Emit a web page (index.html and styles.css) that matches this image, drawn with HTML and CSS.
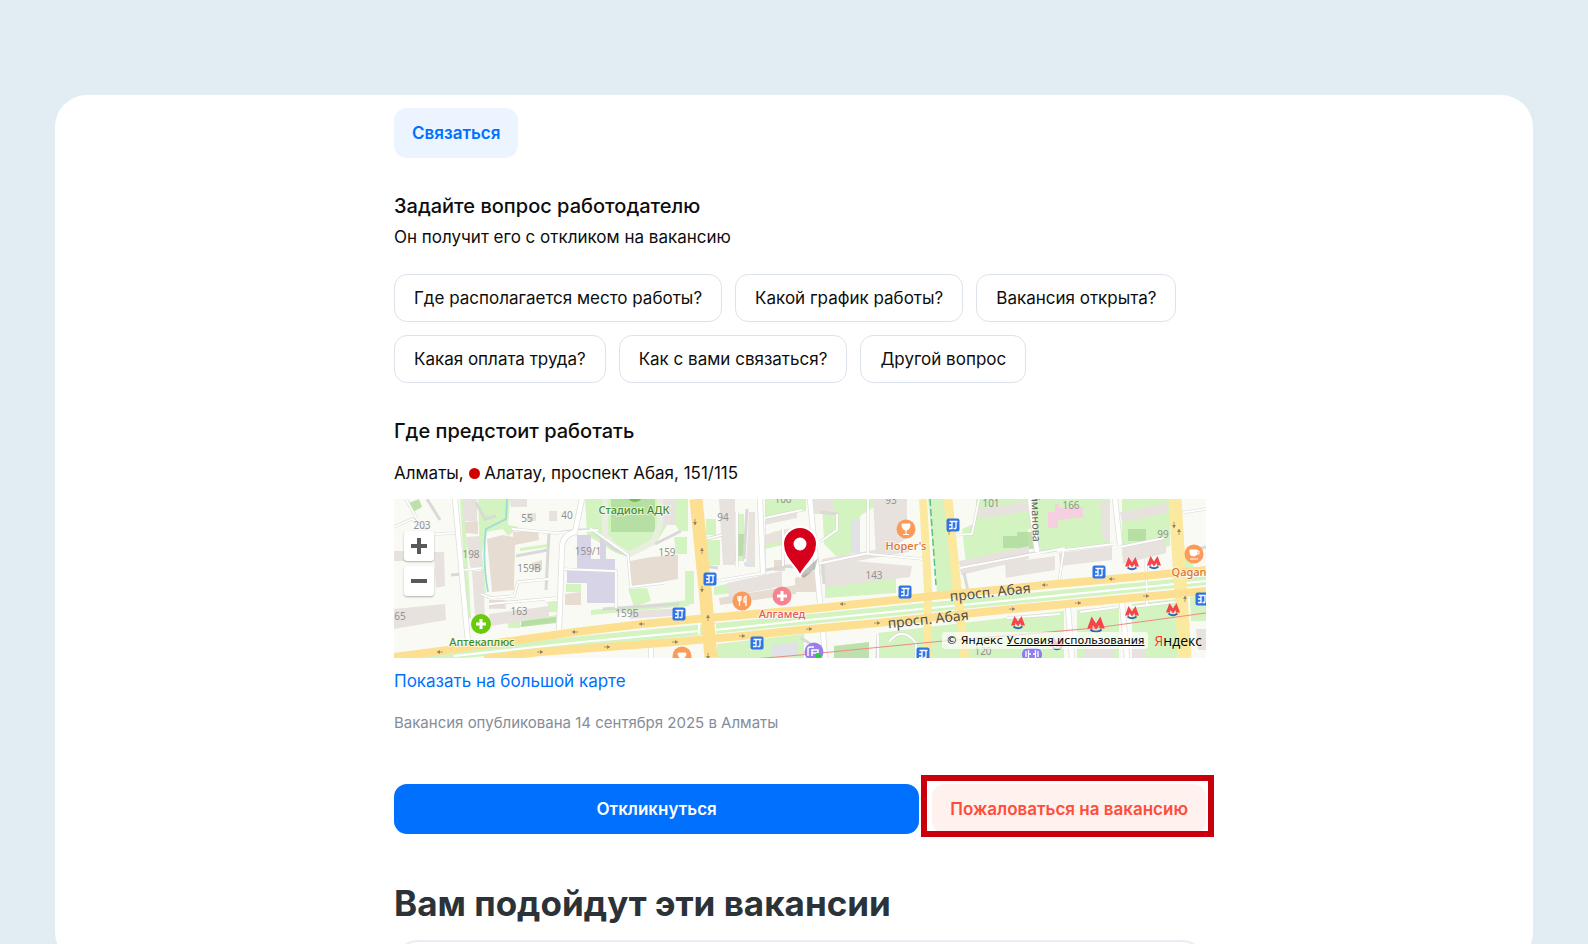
FILE: index.html
```html
<!DOCTYPE html>
<html lang="ru">
<head>
<meta charset="utf-8">
<meta name="viewport" content="width=device-width, initial-scale=1">
<title>Вакансия</title>
<link rel="stylesheet" href="styles.css">
</head>
<body>
<main class="sheet">
  <div class="content">
    <button class="btn btn-soft" type="button">Связаться</button>

    <section class="question">
      <h2 class="title">Задайте вопрос работодателю</h2>
      <p class="text">Он получит его с откликом на вакансию</p>
      <div class="chips">
        <button class="chip" type="button">Где располагается место работы?</button>
        <button class="chip" type="button">Какой график работы?</button>
        <button class="chip" type="button">Вакансия открыта?</button>
        <button class="chip" type="button">Какая оплата труда?</button>
        <button class="chip" type="button">Как с вами связаться?</button>
        <button class="chip" type="button">Другой вопрос</button>
      </div>
    </section>

    <section class="place">
      <h2 class="title">Где предстоит работать</h2>
      <p class="text address">Алматы, <span class="metro-dot"></span> Алатау, проспект Абая, 151/115</p>
      <div class="map">
        <svg class="map-canvas" viewBox="0 0 812 159" preserveAspectRatio="xMidYMid slice" role="img" aria-label="Карта">
          <defs>
            <g id="bus"><rect x="-6.5" y="-6.5" width="13" height="13" rx="2" fill="#2f74e6"/><path d="M-3.500-3.500H4.500M-4 3.500H-1V-3.500M-4 0H-1M3-3.500V3.500M.5 3.500H3" stroke="#fff" stroke-width="1.300" fill="none"/></g>
            <g id="metro"><path d="M-7 3.500L-3.500-6 0-.5 3.500-6 7 3.500H3L2.500 1 0 4.500-2.500 1-3 3.500Z" fill="#f8434a"/><path d="M-4.500 4.500Q0 8 4.500 4.500" fill="none" stroke="#3566b5" stroke-width="1.800"/></g>
            <g id="arrow"><path d="M-3 0H3" stroke="#b59a68"/><path d="M-3 0L0-2V2Z" fill="#8f816d"/></g>
          </defs>
          <rect width="812" height="159" fill="#fafaf5"/>

          <g fill="#d3f3c0">
            <path d="M66 0H70L77 119H73ZM84 0H116L114 26 125 28 114 37 109 30 92 33 88 54 92 94H89L86 58ZM191 0H294V32H285L278 18 262 44 235 58 222 54 193 36ZM126 49L154 45V48L126 52ZM172 85H187V93H172ZM154 102H165V113H154ZM114 122H126V129H114ZM128 121L163 116V122L126 128Z"/>
            <path d="M280 38H293V55H282ZM291 72H300V105H291ZM310 41H326V66H311ZM312 20H322V36H312ZM370 0H412V12L370 18ZM343 15H350V62H341ZM378 33L404 28V43L370 50ZM234 90L253 89 257 102 240 108ZM197 111L295 101V107L197 116ZM320 88L340 83V94L320 96Z"/>
            <path d="M428 0H480V8L466 17V50L446 61 430 45ZM426 63L474 57V60L426 68ZM431 84L502 76V94L431 99ZM582 0H634V55L572 64 568 30 582 24ZM534 0H550L562 92 543 93ZM604 28L634 22V0H716V46L647 55 640 29 604 36ZM728 0H776V47L728 57ZM788 55H799V70H790Z"/>
            <path d="M0 158L188 137 406 116 812 77V86L406 126 188 148 70 159H0ZM323 145L410 135V159H323ZM484 134L670 112V159H482ZM683 111L725 107V159H683ZM738 105L784 100V159H738ZM796 98L812 95V122H797Z"/>
          </g>
          <g fill="#afd99b" opacity=".8">
            <path d="M217 0H261V33H217ZM342 35H350V57H342ZM127 122L162 118V124L127 128ZM15 4L25 0 28 8 19 13ZM440 147L475 143V159H440ZM609 37H632V49H609ZM623 33H640V50H623ZM734 30H752V42H734Z"/>
          </g>
          <path d="M211 0V35Q218 49 236 55L259 43 266 26V0" fill="none" stroke="#e9eee0" stroke-width="6"/>
          <circle cx="241" cy="-5" r="8" fill="#71bd45"/>

          <g fill="#e8e2df">
            <path d="M70 0H83V22H70ZM72 38L86 37 88 68H76ZM78 72H89L91 118H81ZM40 53H50L51 87 42 89ZM0 52H12V62H0ZM0 110L51 105 52 121 0 130ZM95 115L155 107V118L96 127ZM95 101H112V110H95ZM116 0H133V8H117Z"/>
            <path d="M133 14H142V22H133ZM155 12H163V22H155ZM270 0H282V26H270ZM325 0H341V66H329ZM355 13H361V68H352ZM370 18L403 11V19L370 26ZM370 36L402 28V38L370 46ZM333 84L388 72V87L335 98ZM236 112L291 109V116L236 120Z"/>
            <path d="M417 0H440V15H420ZM479 0H513V39L482 59ZM428 60L515 45V53L460 62 518 67 516 78 432 88 426 74ZM584 10L635 2V12L585 20ZM565 62L635 47V60L567 76ZM611 64L661 57V71L612 79ZM665 54L718 47V61L666 67ZM706 2H716V42H709ZM726 13L774 4V14L728 23ZM728 48L772 39V54L729 65ZM692 140H720V159H690ZM738 140H752V159H738ZM802 130H812V151H804Z"/>
          </g>
          <g fill="#e6dcd1">
            <path d="M71 23L84 22V35L71 34ZM93 40L109 36 119 38V33L144 31 145 41 121 46 120 91 98 93ZM95 101H110V109H95ZM171 95L187 93V106H171ZM236 62L257 58 284 56V80L238 88ZM380 61H391V72H380ZM401 79L426 70V93H401ZM325 99L402 86V95L326 106ZM138 64L148 61V71H138Z"/>
          </g>
          <g fill="#d8d4e7">
            <path d="M183 36H197V60H221V104H193V84H173V69H183ZM206 60H212V38H206Z"/>
          </g>
          <path fill="#e1e2e8" d="M457 21H466V54H457ZM378 146L404 143V157H378ZM350 63H358V67H350Z"/>
          <path fill="#f6cfe0" d="M654 13H661V5H665V9L689 8V18L664 21V29H654Z"/>
          <path d="M113 0L112 20 92 30Q88 60 94 93" fill="none" stroke="#9bdcd4" stroke-width="1.800"/>

          <g fill="none" stroke="#d9d9d7" stroke-width="3">
            <path d="M0 28L18 20 33 30M12 0L23 20M33 0L46 21M41 35L65 34M57 76L68 75M70 71L88 69M87 95L97 99 120 97 124 83 155 80M122 57L154 51M118 30L162 34 185 31 204 31M82 4L91 20 102 17M151 102L165 101M95 105L162 99M155 33L152 91M168 70L202 72 222 72V109M196 29L220 50 234 56 237 88 270 84M261 45L287 32M209 110L285 105M312 40L328 36M309 67L324 69M323 82L370 74V0M343 13V68M353 10L350 60M389 30V67L401 68M366 20L408 11M366 72L412 64M426 43L443 31V15L426 13M423 65L475 54M474 0V55L529 60M429 65L430 85M558 36L578 35 585 0M566 69L646 53M570 74L574 92M647 53L670 49 665 83M663 52L720 45M726 48L770 39M752 60L753 107M779 15L812 10M789 54L812 48M484 135L483 159M495 143Q508 126 522 144V159M613 119L666 115M686 113L724 108M738 108L781 103M407 139L423 149"/>
          </g>
          <g fill="none" stroke="#fff" stroke-width="1.800">
            <path d="M0 28L18 20 33 30M12 0L23 20M41 35L65 34M70 71L88 69M87 95L97 99 120 97 124 83 155 80M118 30L162 34 204 31M151 102L165 101M95 105L162 99M168 70L222 72V109M196 29L234 56 237 88 270 84M312 40L328 36M323 82L370 74V0M343 13V68M389 30V67M366 20L408 11M426 43L443 31V15M423 65L475 54M474 0V55L529 60M558 36L578 35 585 0M566 69L670 49 665 83M663 52L720 45M726 48L770 39M752 60L753 107M779 15L812 10M484 135V159M495 143Q508 126 522 144V159M613 119L666 115M686 113L724 108M738 108L781 103"/>
          </g>
          <g fill="none" stroke="#dededb" stroke-width="6">
            <path d="M61 0L74 143M188 0L181 33Q169 36 168 48L165 131M416 0L426 104M429 132L431 159M257 146V159M636 0L643 53M721 0L726 46M674 109L678 159M728 103L733 159M366 0L369 74"/>
          </g>
          <g fill="none" stroke="#fff" stroke-width="4.500">
            <path d="M61 0L74 143M188 0L181 33Q169 36 168 48L165 131M416 0L426 104M429 132L431 159M257 146V159M636 0L643 53M721 0L726 46M674 109L678 159M728 103L733 159M366 0L369 74"/>
          </g>
          <g fill="none" stroke="#fff" stroke-width="2">
            <path d="M60 157L188 143 305 132M321 131L404 122 812 82M321 125V135M305 125V135"/>
          </g>
          <g fill="none" stroke="#fbe99f">
            <path d="M529 0L534 90 533 159" stroke-width="8"/>
            <path d="M554 0L562 80 571 159" stroke-width="9"/>
            <path d="M781 0L791 159" stroke-width="13"/>
          </g>
          <g fill="none" stroke="#fddf91">
            <path d="M302 0L311 90 317 159" stroke-width="13"/>
            <path d="M0 158L46 152 181 133 248 125 314 119 406 111 539 97 651 86 718 80 812 71" stroke-width="8"/>
            <path d="M90 160L146 153 213 148 281 143 348 137 406 131 483 124 618 110 684 104 812 92" stroke-width="8"/>
          </g>
          <path d="M536 0L542 86" stroke="#55c585" stroke-width="1.500" stroke-dasharray="7 3"/>
          <path d="M359 160L406 156 539 143 701 129 812 114" fill="none" stroke="#f08b82" stroke-width="1.200"/>

          <use href="#arrow" x="46" y="153"/><use href="#arrow" x="181" y="133"/><use href="#arrow" x="248" y="125"/><use href="#arrow" x="449" y="105"/><use href="#arrow" x="651" y="86"/><use href="#arrow" x="718" y="80"/>
          <g transform="scale(-1 1)"><use href="#arrow" x="-146" y="153"/><use href="#arrow" x="-213" y="148"/><use href="#arrow" x="-281" y="143"/><use href="#arrow" x="-348" y="137"/><use href="#arrow" x="-415" y="130"/><use href="#arrow" x="-483" y="124"/><use href="#arrow" x="-618" y="110"/><use href="#arrow" x="-684" y="104"/><use href="#arrow" x="-752" y="97"/></g>
          <g transform="rotate(90)"><use href="#arrow" x="52" y="-308"/><use href="#arrow" x="119" y="-314"/><use href="#arrow" x="33" y="-555"/><use href="#arrow" x="33" y="-785"/><use href="#arrow" x="100" y="-791"/></g>
          <g transform="rotate(-90)"><use href="#arrow" x="-23" y="301"/><use href="#arrow" x="-90" y="308"/><use href="#arrow" x="-157" y="314"/><use href="#arrow" x="-26" y="780"/></g>

          <g class="map-number">
            <text x="28" y="30">203</text><text x="77" y="59">198</text><text x="133" y="23">55</text><text x="173" y="20">40</text><text x="194" y="56">159/1</text><text x="135" y="73">159В</text><text x="125" y="116">163</text><text x="6" y="121">65</text>
            <text x="329" y="22">94</text><text x="273" y="57">159</text><text x="233" y="118">159Б</text><text x="389" y="4">100</text><text x="497" y="5">93</text><text x="480" y="80">143</text><text x="597" y="8">101</text><text x="589" y="156">120</text><text x="677" y="10">166</text><text x="769" y="39">99</text>
          </g>

          <use href="#bus" x="316" y="80"/><use href="#bus" x="285" y="115"/><use href="#bus" x="363" y="144"/><use href="#bus" x="559" y="26"/><use href="#bus" x="511" y="93"/><use href="#bus" x="529" y="155"/><use href="#bus" x="705" y="73"/><use href="#bus" x="808" y="100"/>
          <use href="#metro" x="738" y="64"/><use href="#metro" x="760" y="63"/><use href="#metro" x="624" y="123"/><use href="#metro" x="738" y="113"/><use href="#metro" x="779" y="110"/><use href="#metro" x="663" y="144"/>
          <use href="#metro" transform="translate(702 125) scale(1.250)"/>

          <circle cx="87" cy="125" r="10" fill="#69c90b"/><path d="M87 120V130M82 125H92" stroke="#fff" stroke-width="3"/>
          <circle cx="388" cy="97" r="9.500" fill="#f58391"/><path d="M388 92V102M383 97H393" stroke="#fff" stroke-width="3"/>
          <g fill="#fb9a59"><circle cx="348" cy="102" r="9.500"/><circle cx="512" cy="30" r="9.500"/><circle cx="800" cy="55" r="9.500"/><circle cx="288" cy="157" r="9.500"/></g>
          <path d="M344 97V100Q344 102 345.500 102V107M347 97V100Q347 102 345.500 102M345.500 97V102M352 107V97Q349.500 98 350 103H352" stroke="#fff" stroke-width="1.300" fill="none"/>
          <path d="M508 25H516Q516 31 512 31 508 31 508 25ZM512 31V35M509 35.500H515M284 154H292Q292 159 288 159 284 159 284 154Z" fill="#fff" stroke="#fff"/>
          <path d="M796 51H803V54Q803 57 799.500 57 796 57 796 54ZM796 60H804" fill="#fff" stroke="#fff"/><path d="M803 52H805V55H803" stroke="#fff" fill="none"/>
          <circle cx="420" cy="153" r="9.500" fill="#9a7fee"/><path d="M414 157V150Q414 148 416 148H420M418 157V151H424V154H418" fill="none" stroke="#fff" stroke-width="1.500"/><circle cx="424" cy="157" r="3" fill="#25cf3b"/>
          <rect x="628" y="149" width="20" height="13" rx="6" fill="#8f7cf2"/><path d="M632 152V158M634.500 151V159M641.500 151V159M644 152V158M634 155H637M639 155H642" stroke="#fff" stroke-width="1.300"/>

          <g class="map-label">
            <text x="88" y="147" fill="#438f27">Аптекаплюс</text><text x="240" y="15" fill="#438f27">Стадион АДК</text><text x="388" y="119" fill="#e5596e">Алгамед</text><text x="512" y="51" fill="#dc7434">Hoper's</text><text x="795" y="77" fill="#dc7434">Qagan</text>
          </g>
          <g class="map-street">
            <text x="597" y="98" transform="rotate(-6 597 101)">просп. Абая</text><text x="535" y="125" transform="rotate(-6 535 129)">просп. Абая</text>
          </g>
          <text class="map-side" x="646" y="-13" transform="rotate(88 637 -13)">йманова</text>

          <path d="M406 76L424 59 421 70 410 79Z" fill="#555" opacity=".35"/>
          <path d="M406 77C402 67 389 59 389 45A17 17 0 0 1 423 45C423 59 410 67 406 77Z" fill="#d6001c" stroke="#fff" stroke-width="2"/>
          <circle cx="406" cy="45" r="6.500" fill="#fff"/>
        </svg>
        <div class="zoom">
          <button class="zoom-btn" type="button" aria-label="Приблизить"><svg viewBox="0 0 16 16" width="16" height="16"><path d="M8 0V16M0 8H16" stroke="#595959" stroke-width="4"/></svg></button>
          <button class="zoom-btn" type="button" aria-label="Отдалить"><svg viewBox="0 0 16 16" width="16" height="16"><path d="M0 8H16" stroke="#595959" stroke-width="4"/></svg></button>
        </div>
        <div class="copyright">
          <span class="terms">© Яндекс <a class="terms-link" href="#">Условия использования</a></span>
          <span class="brand"><span class="brand-first">Я</span>ндекс</span>
        </div>
      </div>
      <a class="map-link" href="#">Показать на большой карте</a>
    </section>

    <p class="published">Вакансия опубликована 14 сентября 2025 в Алматы</p>

    <div class="actions">
      <button class="btn btn-primary" type="button">Откликнуться</button>
      <div class="highlight"><button class="btn btn-danger" type="button">Пожаловаться на вакансию</button></div>
    </div>

    <h1 class="related-title">Вам подойдут эти вакансии</h1>
    <div class="vacancy-card"></div>
  </div>
</main>
</body>
</html>
```
FILE: styles.css
```css
* { box-sizing: border-box; }

body {
  margin: 0;
  height: 100vh;
  overflow: hidden;
  padding: 95px 55px 0;
  background: #e2edf3;
  color: #0d0d0d;
  font-family: Inter, "Liberation Sans", sans-serif;
  font-size: 17px;
  line-height: 24px;
}

button { font: inherit; cursor: pointer; }
h1, h2, p { margin: 0; }
a { color: #0070ff; text-decoration: none; }

.sheet {
  padding: 13px 0 0 12px;
  border-radius: 32px;
  background: #fff;
}

.content {
  max-width: 812px;
  margin: 0 auto;
}

.btn {
  height: 50px;
  padding: 0 18px;
  border: 0;
  border-radius: 13px;
  font-weight: 600;
}

.btn-soft { background: #ebf4ff; color: #0070ff; }
.btn-primary { flex: 1; background: #0070ff; color: #fff; }
.btn-danger { background: #fef1ee; color: #ff4d3a; }

.question { margin-top: 35px; }

.title {
  font-size: 20px;
  line-height: 26px;
  font-weight: 500;
}

.question .text { margin-top: 6px; }

.chips {
  display: flex;
  flex-wrap: wrap;
  gap: 13px;
  margin-top: 25px;
}

.chip {
  height: 48px;
  padding: 0 19px;
  border: 1px solid #dce3eb;
  border-radius: 13px;
  background: #fff;
  color: #0d0d0d;
}

.place { margin-top: 35px; }
.address { margin: 17px 0 14px; }

.metro-dot {
  display: inline-block;
  width: 11px;
  height: 11px;
  border-radius: 50%;
  background: #d00000;
}

.map {
  position: relative;
  height: 159px;
  overflow: hidden;
}

.map-canvas {
  display: block;
  width: 100%;
  height: 100%;
}

.map-number {
  font: 10px "Noto Sans", sans-serif;
  fill: #929292;
  text-anchor: middle;
}

.map-label {
  font: 500 11px "Noto Sans", sans-serif;
  text-anchor: middle;
  stroke: #fff;
  stroke-width: 2px;
  stroke-opacity: 0.6;
  paint-order: stroke;
}

.map-street {
  font: 14px "Noto Sans", sans-serif;
  fill: #4f4f4f;
  text-anchor: middle;
}

.map-side {
  font: 11px "Noto Sans", sans-serif;
  fill: #5f5f5f;
}

.zoom {
  position: absolute;
  top: 32px;
  left: 10px;
  display: grid;
  gap: 5px;
}

.zoom-btn {
  display: grid;
  place-items: center;
  width: 30px;
  height: 30px;
  padding: 0;
  border: 0;
  border-radius: 3px;
  background: #fff;
  box-shadow: 0 1px 2px rgba(0, 0, 0, 0.3);
}

.copyright {
  position: absolute;
  right: 4px;
  bottom: 9px;
  display: flex;
  align-items: center;
  gap: 6px;
  color: #000;
  line-height: 17px;
}

.terms {
  display: flex;
  gap: 4px;
  padding: 0 4px;
  border-radius: 3px;
  background: rgba(255, 255, 255, 0.7);
  font-family: "DejaVu Sans", sans-serif;
  font-size: 11px;
}

.terms-link { color: #000; text-decoration: underline; }

.brand {
  font-family: "Open Sans", sans-serif;
  font-size: 14px;
  font-weight: 500;
}

.brand-first { color: #f33; }

.map-link {
  display: block;
  width: fit-content;
  margin-top: 11px;
}

.published {
  margin-top: 18px;
  color: #848d99;
  font-size: 15px;
}

.actions {
  display: flex;
  gap: 13px;
  margin-top: 49px;
}

.highlight { position: relative; }

.highlight::after {
  content: "";
  position: absolute;
  inset: -9px -8px -3px -11px;
  border: 6px solid #c9000b;
  pointer-events: none;
}

.related-title {
  margin-top: 46px;
  color: #2b3238;
  font-size: 35px;
  line-height: 46px;
  font-weight: 700;
}

.vacancy-card {
  height: 24px;
  margin-top: 14px;
  border: 2px solid #e9eef4;
  border-bottom: 0;
  border-radius: 24px 24px 0 0;
}
```
